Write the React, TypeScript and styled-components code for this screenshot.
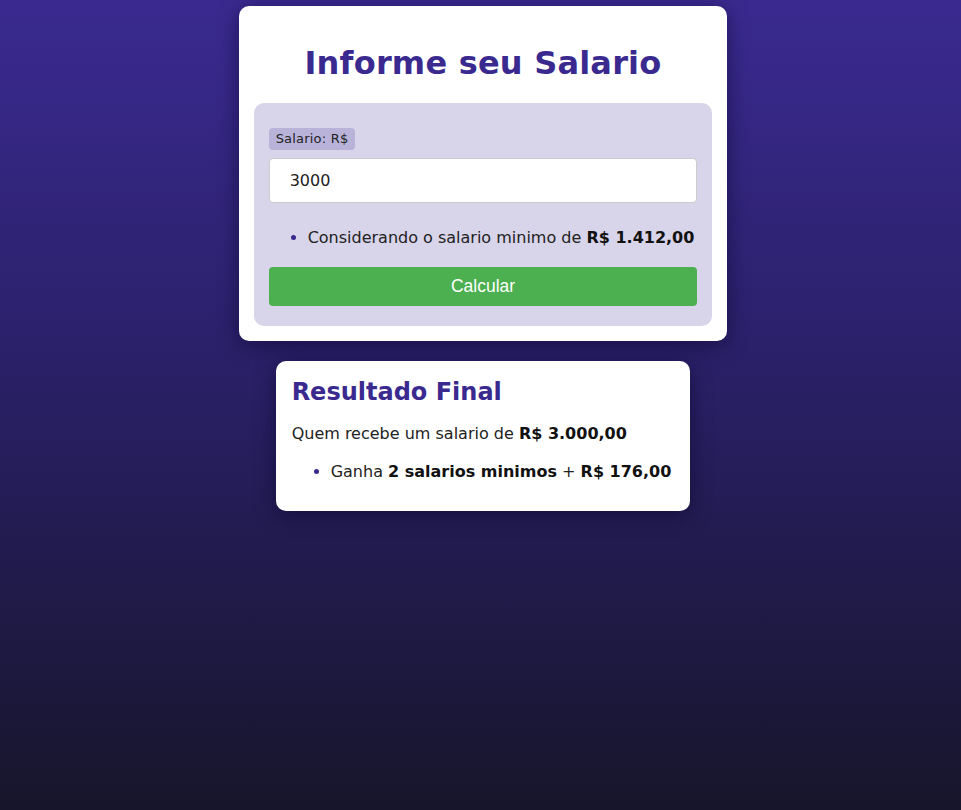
import React from "react";
import styled, { createGlobalStyle } from "styled-components";

const Global = createGlobalStyle`
  html, body { margin: 0; padding: 0; }
  body {
    min-height: 810px;
    background: linear-gradient(to bottom, #3a2a90 0%, #2a2068 45%, #17152b 100%);
    font-family: "DejaVu Sans", Verdana, sans-serif;
    color: #222;
  }
  strong { color: #111; }
`;

const Page = styled.main`
  display: flex;
  flex-direction: column;
  align-items: center;
  gap: 20px;
  padding: 6px 0 0 5px;
`;

const Card = styled.section<{ $padX?: number }>`
  background: #fff;
  border-radius: 10px;
  padding: 15px ${(p) => p.$padX ?? 15}px;
  width: fit-content;
  box-shadow: 0 4px 20px rgba(10, 5, 40, 0.55);
`;

const Title = styled.h1`
  margin: 20px 0 18px;
  text-align: center;
  color: #3a2a90;
  font-size: 32px;
  letter-spacing: 0.2px;
  line-height: 44px;
  font-weight: bold;
`;

const Panel = styled.div`
  background: #d8d4e9;
  border-radius: 10px;
  padding: 25px 15px 20px;
  display: flex;
  flex-direction: column;
`;

const Label = styled.label`
  align-self: flex-start;
  background: #b9b3da;
  border-radius: 4px;
  padding: 3px 7px;
  font-size: 13px;
  letter-spacing: 0.2px;
  line-height: 16px;
  color: #222;
`;

const Input = styled.input`
  margin-top: 8px;
  height: 45px;
  box-sizing: border-box;
  border: 1px solid #ccc;
  border-radius: 4px;
  padding: 0 20px;
  font-family: "DejaVu Sans", Verdana, sans-serif;
  font-size: 16px;
  color: #222;
  outline: none;
`;

const List = styled.ul<{ $mt: number; $mb: number }>`
  margin: ${(p) => p.$mt}px 0 ${(p) => p.$mb}px;
  padding: 0 3px 0 39px;
  font-size: 16px;
  line-height: 22px;
  & li::marker { color: #3a2a90; }
`;

const Button = styled.button`
  height: 39px;
  border: none;
  border-radius: 4px;
  background: #4caf50;
  color: #fff;
  font-family: "Liberation Sans", Arial, sans-serif;
  font-size: 17.5px;
  cursor: pointer;
`;

const ResultTitle = styled.h2`
  margin: 0 0 15px;
  color: #3a2a90;
  font-size: 24px;
  line-height: 32px;
  font-weight: bold;
`;

const Paragraph = styled.p`
  margin: 0;
  font-size: 16px;
  line-height: 22px;
`;

export default function App() {
  return (
    <>
      <Global />
      <Page>
        <Card>
          <Title>Informe seu Salario</Title>
          <Panel>
            <Label htmlFor="sal">Salario: R$</Label>
            <Input id="sal" defaultValue="3000" />
            <List $mt={24} $mb={18}>
              <li>
                Considerando o salario minimo de <strong>R$ 1.412,00</strong>
              </li>
            </List>
            <Button>Calcular</Button>
          </Panel>
        </Card>
        <Card $padX={16}>
          <ResultTitle>Resultado Final</ResultTitle>
          <Paragraph>
            Quem recebe um salario de <strong>R$ 3.000,00</strong>
          </Paragraph>
          <List $mt={16} $mb={13}>
            <li>
              Ganha <strong>2 salarios minimos</strong> + <strong>R$ 176,00</strong>
            </li>
          </List>
        </Card>
      </Page>
    </>
  );
}
